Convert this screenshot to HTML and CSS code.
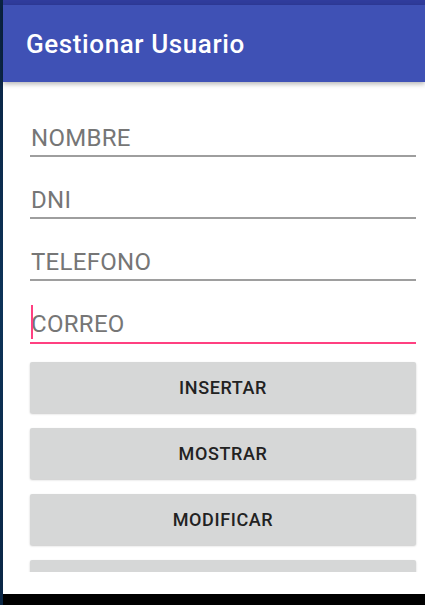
FILE: index.html
```html
<!DOCTYPE html>
<html lang="es">
<head>
<meta charset="utf-8">
<title>Gestionar Usuario</title>
<link rel="stylesheet" href="styles.css">
</head>
<body>
<div class="screen">
  <div class="edge"></div>
  <div class="app">
    <div class="status"></div>
    <header class="appbar"><h1 class="title">Gestionar Usuario</h1></header>
    <main class="content">
      <div class="field">NOMBRE</div>
      <div class="field">DNI</div>
      <div class="field">TELEFONO</div>
      <div class="field focused"><span class="caret"></span>CORREO</div>
      <div class="buttons">
        <button class="btn">INSERTAR</button>
        <button class="btn">MOSTRAR</button>
        <button class="btn">MODIFICAR</button>
        <button class="btn" aria-label="ELIMINAR"></button>
      </div>
    </main>
    <div class="spacer"></div>
    <div class="navbar"></div>
  </div>
</div>
</body>
</html>
```
FILE: styles.css
```css
html, body {
  margin: 0;
  padding: 0;
  width: 425px;
  height: 605px;
  overflow: hidden;
  background: #0c2a4a;
  font-family: Roboto, "Noto Sans", sans-serif;
}
.screen {
  display: flex;
  width: 425px;
  height: 605px;
}
.edge {
  width: 3px;
  flex: none;
  background: linear-gradient(#0a2342, #0d3358 50%, #0a2645);
}
.app {
  flex: 1;
  display: flex;
  flex-direction: column;
  background: #ffffff;
}
.status {
  height: 5px;
  flex: none;
  background: #303c9c;
}
.appbar {
  height: 77px;
  flex: none;
  background: #3f51b5;
  display: flex;
  align-items: center;
  padding-left: 23px;
  box-shadow: 0 2px 5px rgba(0, 0, 0, 0.3);
  position: relative;
  z-index: 1;
}
.title {
  margin: 0;
  color: #ffffff;
  font-size: 26px;
  font-weight: 500;
  letter-spacing: 0.6px;
}
.content {
  height: 490px;
  flex: none;
  overflow: hidden;
  box-sizing: border-box;
  padding: 42px 9px 0 27px;
  display: flex;
  flex-direction: column;
  gap: 29px;
}
.field {
  position: relative;
  font-size: 24px;
  line-height: 28px;
  color: #767676;
  padding-left: 1px;
  padding-bottom: 3px;
  border-bottom: 2px solid #9e9e9e;
  letter-spacing: 0.3px;
}
.field.focused {
  padding-bottom: 4px;
  border-bottom: 2px solid #ff4081;
}
.caret {
  position: absolute;
  left: 1px;
  top: -5px;
  width: 2px;
  height: 34px;
  background: #ff4081;
}
.buttons {
  margin-top: -11px;
  display: flex;
  flex-direction: column;
  gap: 15px;
}
.btn {
  height: 51px;
  flex: none;
  border: none;
  border-radius: 2px;
  background: #d6d7d7;
  box-shadow: 0 1px 2px rgba(0, 0, 0, 0.22);
  font-family: Roboto, "Noto Sans", sans-serif;
  font-size: 18px;
  font-weight: 500;
  letter-spacing: 0.6px;
  color: #222222;
  padding: 0;
}
.spacer {
  height: 22px;
  flex: none;
  background: #ffffff;
}
.navbar {
  height: 11px;
  flex: none;
  background: #000000;
}
```
